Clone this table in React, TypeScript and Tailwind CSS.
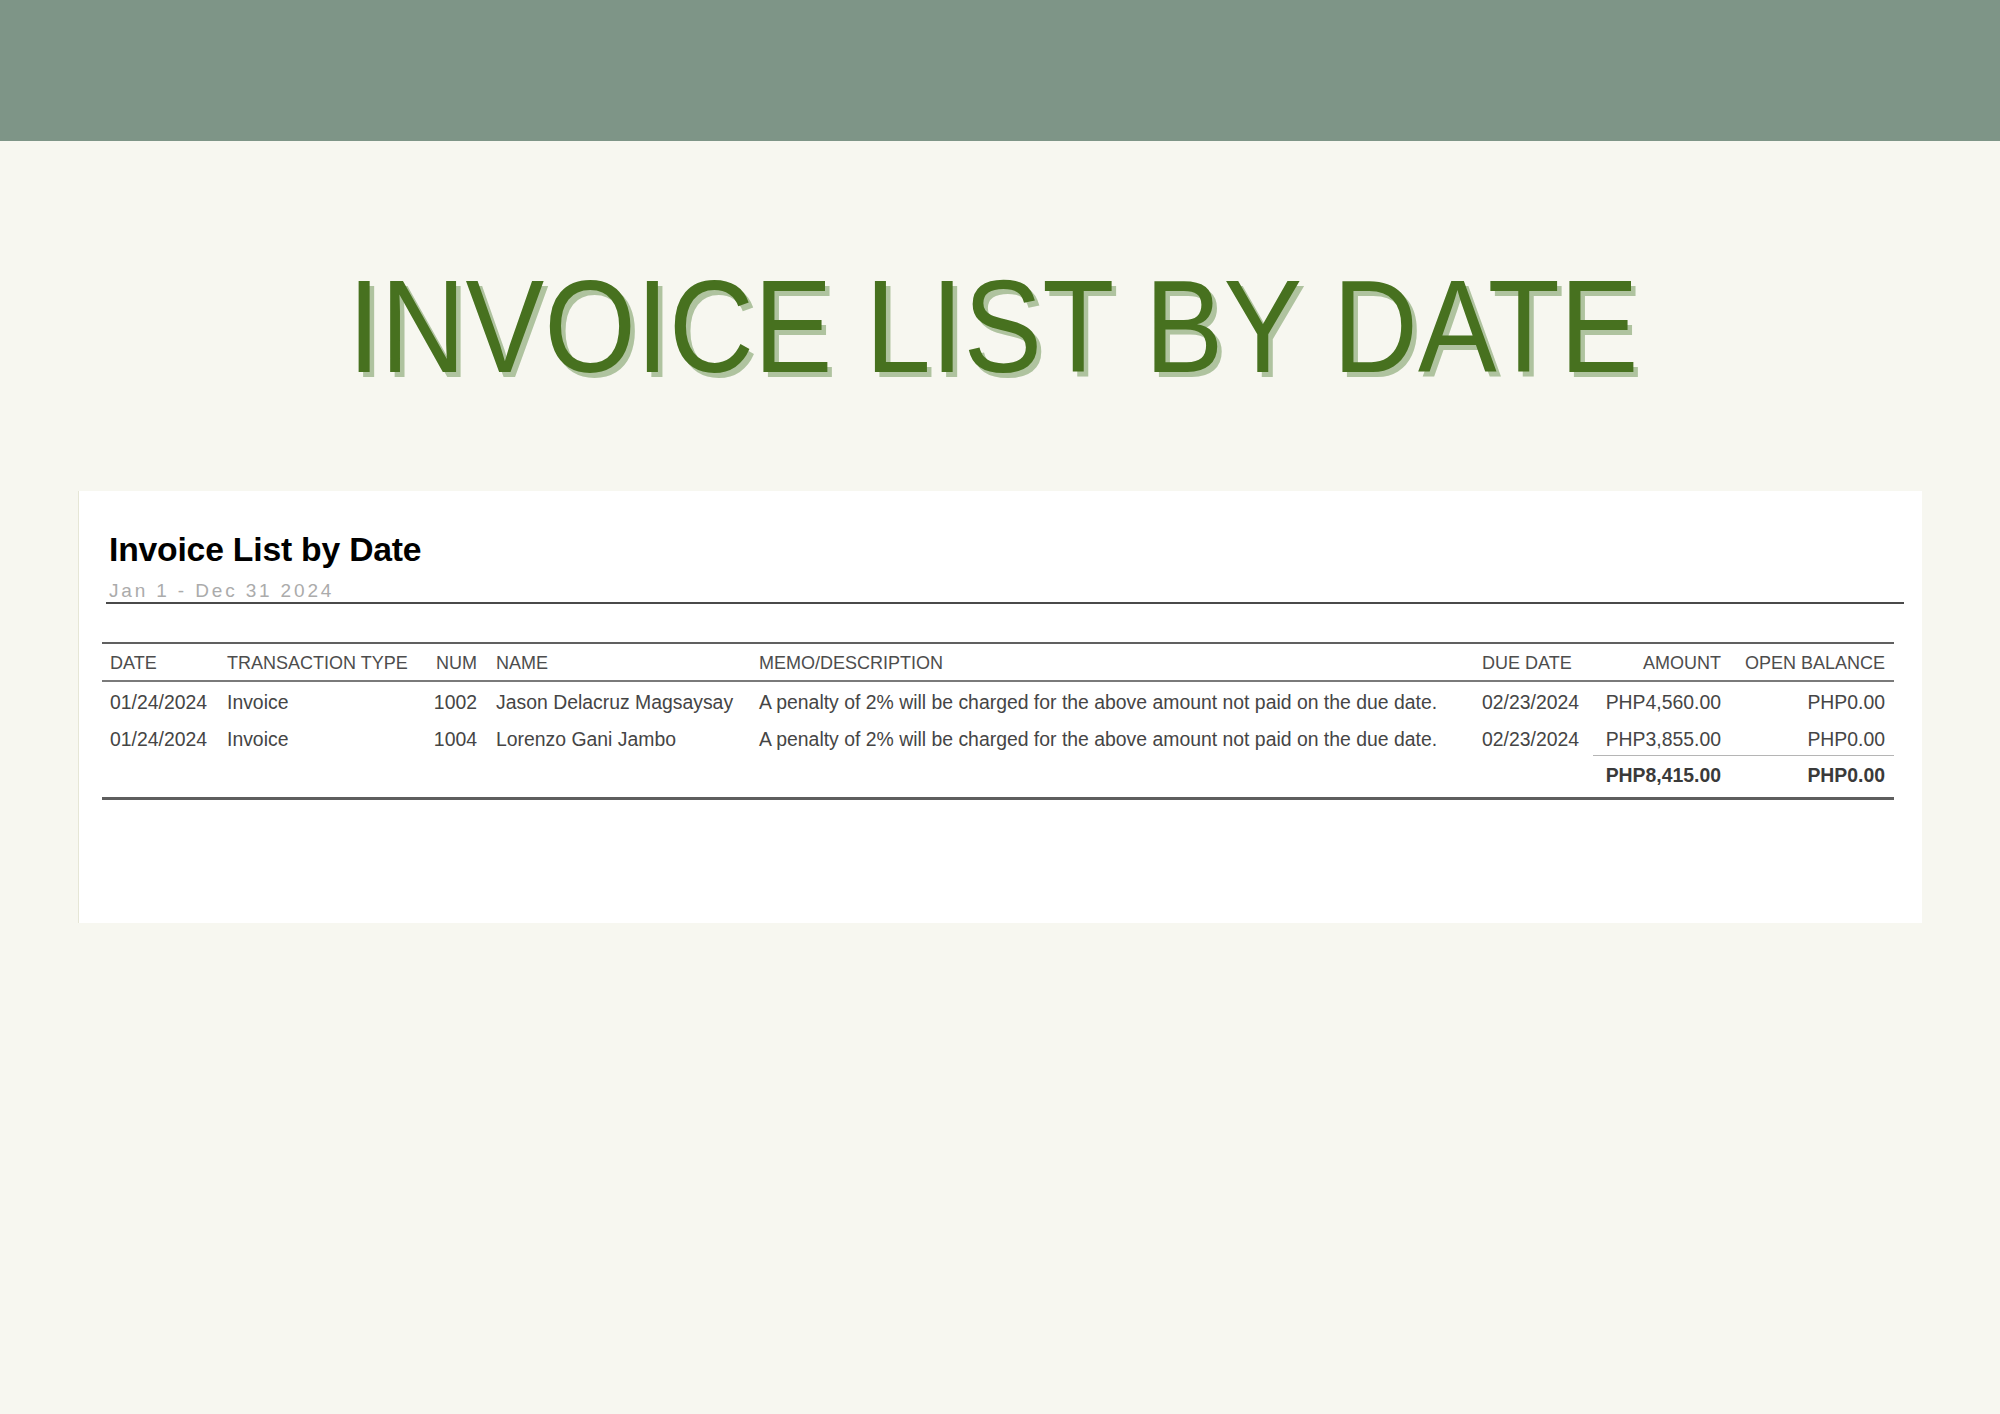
import React from "react";

const cols = "grid grid-cols-[117px_181px_88px_263px_723px_119px_136px_165px]";

const rows = [
  {
    date: "01/24/2024",
    type: "Invoice",
    num: "1002",
    name: "Jason Delacruz Magsaysay",
    memo: "A penalty of 2% will be charged for the above amount not paid on the due date.",
    due: "02/23/2024",
    amount: "PHP4,560.00",
    open: "PHP0.00",
  },
  {
    date: "01/24/2024",
    type: "Invoice",
    num: "1004",
    name: "Lorenzo Gani Jambo",
    memo: "A penalty of 2% will be charged for the above amount not paid on the due date.",
    due: "02/23/2024",
    amount: "PHP3,855.00",
    open: "PHP0.00",
  },
];

export default function App() {
  return (
    <div className="w-[2000px] h-[1414px] bg-[#f7f7f0] font-['Liberation_Sans',Arial,sans-serif] overflow-hidden">
      <div className="h-[141px] bg-[#7e9587]" />
      <div className="pt-[120px] flex justify-center">
        <h1 className="mr-[14px] text-[131px] leading-none text-[#47711f] scale-x-[0.9] whitespace-nowrap [text-shadow:5px_5px_0_#afc39f]">
          INVOICE LIST BY DATE
        </h1>
      </div>
      <div className="mt-[99px] ml-[78px] w-[1844px] h-[432px] bg-white border-l border-[#e6e6d6]">
        <div className="ml-[27px] mr-[18px] pt-[42px]">
          <div className="pl-[3px] text-[33.7px] leading-none font-bold text-black tracking-[-0.2px]">
            Invoice List by Date
          </div>
          <div className="mt-[14px] pl-[3px] pb-[2px] text-[19px] leading-none text-[#ababab] tracking-[2.85px] border-b-2 border-[#4a4a4a]">
            Jan 1 - Dec 31 2024
          </div>
        </div>
        <div className="ml-[23px] mt-[38px] w-[1792px] text-[19.4px] text-[#454545] whitespace-nowrap">
          <div className={`${cols} h-[40px] pt-[4px] items-center border-t-2 border-b-2 border-t-[#606060] border-b-[#7a7a7a] text-[18px] text-[#4d4d4d]`}>
            <div className="pl-2">DATE</div>
            <div className="pl-2">TRANSACTION TYPE</div>
            <div className="text-right pr-[11px]">NUM</div>
            <div className="pl-2">NAME</div>
            <div className="pl-2">MEMO/DESCRIPTION</div>
            <div className="pl-2">DUE DATE</div>
            <div className="text-right pr-2">AMOUNT</div>
            <div className="text-right pr-[9px]">OPEN BALANCE</div>
          </div>
          {rows.map((r, i) => (
            <div key={i} className={`${cols} h-[37px] items-center`}>
              <div className="pl-2 pt-[4px]">{r.date}</div>
              <div className="pl-2 pt-[4px]">{r.type}</div>
              <div className="text-right pr-[11px] pt-[4px]">{r.num}</div>
              <div className="pl-2 pt-[4px]">{r.name}</div>
              <div className="pl-2 pt-[4px]">{r.memo}</div>
              <div className="pl-2 pt-[4px]">{r.due}</div>
              <div className={`pr-2 pt-[5px] h-full flex items-center justify-end ${i === 1 ? "border-b border-[#b5b5b5]" : ""}`}>{r.amount}</div>
              <div className={`pr-[9px] pt-[5px] h-full flex items-center justify-end ${i === 1 ? "border-b border-[#b5b5b5]" : ""}`}>{r.open}</div>
            </div>
          ))}
          <div className={`${cols} h-[44px] pb-[2px] items-center border-b-[3px] border-[#5e5e5e] font-bold text-[#3a3a3a]`}>
            <div />
            <div />
            <div />
            <div />
            <div />
            <div />
            <div className="text-right pr-2">PHP8,415.00</div>
            <div className="text-right pr-[9px]">PHP0.00</div>
          </div>
        </div>
      </div>
    </div>
  );
}
